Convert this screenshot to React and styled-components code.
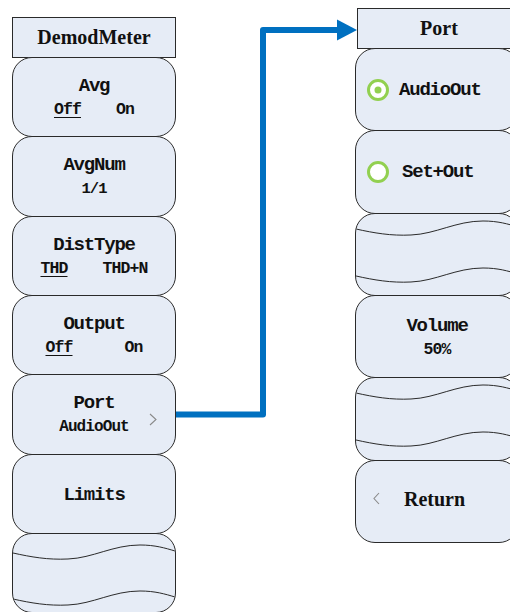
import React from 'react';
import styled, { createGlobalStyle } from 'styled-components';

const Global = createGlobalStyle`
  html, body { margin: 0; padding: 0; background: #ffffff; overflow: hidden; }
  body { width: 510px; height: 612px; font-family: "Liberation Mono", monospace; }
`;

const Stage = styled.div`
  display: flex;
  align-items: flex-start;
  width: 510px;
  height: 612px;
  overflow: hidden;
`;

const Column = styled.div`
  flex: 0 0 164px;
  width: 164px;
  display: flex;
  flex-direction: column;
  margin-left: ${p => p.$left || 0}px;
  padding-top: ${p => p.$top}px;
`;

const Connector = styled.div`
  flex: 0 0 179px;
  width: 179px;
  height: 612px;
  svg { display: block; overflow: visible; }
`;

const Title = styled.div`
  box-sizing: border-box;
  width: 164px;
  height: ${p => p.$h}px;
  margin-left: ${p => p.$shift || 0}px;
  border: 1px solid #2a2a2a;
  background: #e6ecf6;
  display: flex;
  align-items: center;
  justify-content: center;
  font-family: "Liberation Serif", "Times New Roman", serif;
  font-weight: 700;
  font-size: 20px;
  color: #111;
`;

const Key = styled.div`
  position: relative;
  box-sizing: border-box;
  width: 164px;
  height: ${p => p.$h}px;
  margin-top: -1px;
  border: 1px solid #2a2a2a;
  border-radius: 20px;
  background: #e6ecf6;
  overflow: hidden;
  display: flex;
  flex-direction: ${p => (p.$row ? 'row' : 'column')};
  align-items: center;
  justify-content: ${p => (p.$row ? 'flex-start' : 'center')};
  gap: 2px;
  padding: ${p => (p.$row ? `0 0 ${p.$padBottom || 0}px ${p.$padLeft}px` : '2px 0 0')};
`;

const Label = styled.div`
  font-family: "Liberation Mono", "DejaVu Sans Mono", monospace;
  font-weight: 700;
  font-size: 19px;
  letter-spacing: -1.2px;
  line-height: 22px;
  color: #111;
  white-space: pre;
  margin-left: ${p => p.$gap || 0}px;
`;

const Sub = styled.div`
  display: flex;
  gap: ${p => p.$gap || 0}px;
  font-family: "Liberation Mono", "DejaVu Sans Mono", monospace;
  font-weight: 700;
  font-size: ${p => p.$size || 16.5}px;
  letter-spacing: ${p => p.$ls ?? -0.9}px;
  line-height: 22px;
  color: #111;
  white-space: pre;
`;

const Opt = styled.span`
  text-decoration: ${p => (p.$on ? 'underline' : 'none')};
  text-underline-offset: 3px;
  text-decoration-thickness: 1px;
`;

const SerifLabel = styled.div`
  font-family: "Liberation Serif", "Times New Roman", serif;
  font-weight: 700;
  font-size: 20px;
  line-height: 24px;
  color: #111;
  margin-left: ${p => p.$gap || 0}px;
`;

const Chevron = styled.svg`
  position: absolute;
  right: 18px;
  top: 38px;
  width: 8px;
  height: 13px;
`;

const LeftChevron = styled.svg`
  flex: 0 0 7px;
  width: 7px;
  height: 13px;
`;

const Radio = styled.svg`
  flex: 0 0 22px;
  width: 22px;
  height: 22px;
`;

const WaveArt = styled.svg`
  position: absolute;
  inset: 0;
  width: 100%;
  height: 100%;
`;

const wavePath = (y) =>
  `M0,${y} C18,${y + 4} 35,${y + 7} 55,${y + 6} C80,${y + 5} 100,${y - 8} 127,${y - 8} C142,${y - 8} 152,${y - 5} 162,${y - 2}`;

const Wave = ({ h, y0, gap }) => (
  <Key $h={h}>
    <WaveArt viewBox={`0 0 162 ${h - 2}`} preserveAspectRatio="none">
      <path d={wavePath(y0)} fill="none" stroke="#2a2a2a" strokeWidth="1" vectorEffect="non-scaling-stroke" />
      <path d={wavePath(y0 + gap)} fill="none" stroke="#2a2a2a" strokeWidth="1" vectorEffect="non-scaling-stroke" />
    </WaveArt>
  </Key>
);

const RadioIcon = ({ on }) => (
  <Radio viewBox="0 0 22 22">
    <circle cx="11" cy="11" r="9.5" fill="#ffffff" stroke="#92d050" strokeWidth="3" />
    {on && <circle cx="11" cy="11" r="3.5" fill="#92d050" />}
  </Radio>
);

const LH = 80.33;
const RH = 83.33;

export default function App() {
  return (
    <>
      <Global />
      <Stage>
        <Column $left={12} $top={17}>
          <Title $h={41}>DemodMeter</Title>
          <Key $h={LH}>
            <Label>Avg</Label>
            <Sub $gap={35}>
              <Opt $on>Off</Opt>
              <Opt>On</Opt>
            </Sub>
          </Key>
          <Key $h={LH}>
            <Label>AvgNum</Label>
            <Sub $size={15.5} $ls={-1}>1/1</Sub>
          </Key>
          <Key $h={LH}>
            <Label>DistType</Label>
            <Sub $gap={35}>
              <Opt $on>THD</Opt>
              <Opt>THD+N</Opt>
            </Sub>
          </Key>
          <Key $h={LH}>
            <Label>Output</Label>
            <Sub $gap={52}>
              <Opt $on>Off</Opt>
              <Opt>On</Opt>
            </Sub>
          </Key>
          <Key $h={LH}>
            <Label>Port</Label>
            <Sub $size={16} $ls={-0.9}>AudioOut</Sub>
            <Chevron viewBox="0 0 8 13">
              <polyline points="1,1 7,6.5 1,12" fill="none" stroke="#8a8a8a" strokeWidth="1.1" />
            </Chevron>
          </Key>
          <Key $h={LH}>
            <Label>Limits</Label>
          </Key>
          <Wave h={LH} y0={19} gap={46} />
        </Column>

        <Connector>
          <svg width="179" height="612" viewBox="0 0 179 612">
            <path d="M0 414.5 H87 V30 H164" fill="none" stroke="#0070c0" strokeWidth="6" strokeLinejoin="round" />
            <polygon points="161,19.5 181,30 161,40.5" fill="#0070c0" />
          </svg>
        </Connector>

        <Column $top={8}>
          <Title $h={41} $shift={2}>Port</Title>
          <Key $h={RH} $row $padLeft={11}>
            <RadioIcon on />
            <Label $gap={8}>AudioOut</Label>
          </Key>
          <Key $h={RH} $row $padLeft={11}>
            <RadioIcon />
            <Label $gap={11}>Set+Out</Label>
          </Key>
          <Wave h={RH} y0={15} gap={47} />
          <Key $h={RH}>
            <Label>Volume</Label>
            <Sub>50%</Sub>
          </Key>
          <Wave h={RH} y0={15} gap={47} />
          <Key $h={RH} $row $padLeft={17} $padBottom={5}>
            <LeftChevron viewBox="0 0 7 13">
              <polyline points="6,1 1,6.5 6,12" fill="none" stroke="#8a8a8a" strokeWidth="1.1" />
            </LeftChevron>
            <SerifLabel $gap={22}>Return</SerifLabel>
          </Key>
        </Column>
      </Stage>
    </>
  );
}
